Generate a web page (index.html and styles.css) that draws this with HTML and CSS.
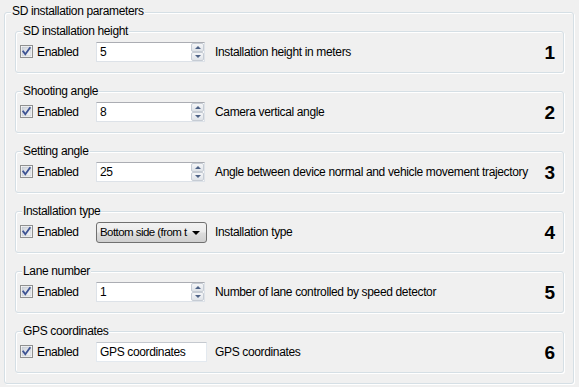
FILE: index.html
```html
<!DOCTYPE html>
<html>
<head>
<meta charset="utf-8">
<link rel="stylesheet" href="styles.css">
</head>
<body>
<div class="outer">
  <span class="legend outer-legend">SD installation parameters</span>

  <div class="group">
    <span class="legend">SD installation height</span>
    <div class="row">
      <label class="chk"><svg class="box" width="13" height="13" viewBox="0 0 13 13"><defs><linearGradient id="g1" x1="0" y1="0" x2="1" y2="1"><stop offset="0" stop-color="#cdd2d9"/><stop offset="1" stop-color="#f7f7f8"/></linearGradient></defs><rect x="0.5" y="0.5" width="12" height="12" fill="#fff" stroke="#8e8f8f"/><rect x="2" y="2" width="9" height="9" fill="url(#g1)" stroke="#b9bec6" stroke-width="0.6"/><path d="M3.2 6.4 L5.3 9.2 L9.8 3" fill="none" stroke="#3d5394" stroke-width="1.8" stroke-linecap="square"/></svg><span>Enabled</span></label>
      <div class="field spin"><span class="val">5</span><span class="btns"><span class="btn"><i class="up"></i></span><span class="btn"><i class="dn"></i></span></span></div>
      <span class="desc">Installation height in meters</span>
      <span class="num">1</span>
    </div>
  </div>

  <div class="group">
    <span class="legend">Shooting angle</span>
    <div class="row">
      <label class="chk"><svg class="box" width="13" height="13" viewBox="0 0 13 13"><rect x="0.5" y="0.5" width="12" height="12" fill="#fff" stroke="#8e8f8f"/><rect x="2" y="2" width="9" height="9" fill="url(#g1)" stroke="#b9bec6" stroke-width="0.6"/><path d="M3.2 6.4 L5.3 9.2 L9.8 3" fill="none" stroke="#3d5394" stroke-width="1.8" stroke-linecap="square"/></svg><span>Enabled</span></label>
      <div class="field spin"><span class="val">8</span><span class="btns"><span class="btn"><i class="up"></i></span><span class="btn"><i class="dn"></i></span></span></div>
      <span class="desc">Camera vertical angle</span>
      <span class="num">2</span>
    </div>
  </div>

  <div class="group">
    <span class="legend">Setting angle</span>
    <div class="row">
      <label class="chk"><svg class="box" width="13" height="13" viewBox="0 0 13 13"><rect x="0.5" y="0.5" width="12" height="12" fill="#fff" stroke="#8e8f8f"/><rect x="2" y="2" width="9" height="9" fill="url(#g1)" stroke="#b9bec6" stroke-width="0.6"/><path d="M3.2 6.4 L5.3 9.2 L9.8 3" fill="none" stroke="#3d5394" stroke-width="1.8" stroke-linecap="square"/></svg><span>Enabled</span></label>
      <div class="field spin"><span class="val">25</span><span class="btns"><span class="btn"><i class="up"></i></span><span class="btn"><i class="dn"></i></span></span></div>
      <span class="desc">Angle between device normal and vehicle movement trajectory</span>
      <span class="num">3</span>
    </div>
  </div>

  <div class="group">
    <span class="legend">Installation type</span>
    <div class="row">
      <label class="chk"><svg class="box" width="13" height="13" viewBox="0 0 13 13"><rect x="0.5" y="0.5" width="12" height="12" fill="#fff" stroke="#8e8f8f"/><rect x="2" y="2" width="9" height="9" fill="url(#g1)" stroke="#b9bec6" stroke-width="0.6"/><path d="M3.2 6.4 L5.3 9.2 L9.8 3" fill="none" stroke="#3d5394" stroke-width="1.8" stroke-linecap="square"/></svg><span>Enabled</span></label>
      <div class="combo"><span class="combo-text">Bottom side (from t</span><span class="arrow"></span></div>
      <span class="desc">Installation type</span>
      <span class="num">4</span>
    </div>
  </div>

  <div class="group">
    <span class="legend">Lane number</span>
    <div class="row">
      <label class="chk"><svg class="box" width="13" height="13" viewBox="0 0 13 13"><rect x="0.5" y="0.5" width="12" height="12" fill="#fff" stroke="#8e8f8f"/><rect x="2" y="2" width="9" height="9" fill="url(#g1)" stroke="#b9bec6" stroke-width="0.6"/><path d="M3.2 6.4 L5.3 9.2 L9.8 3" fill="none" stroke="#3d5394" stroke-width="1.8" stroke-linecap="square"/></svg><span>Enabled</span></label>
      <div class="field spin"><span class="val">1</span><span class="btns"><span class="btn"><i class="up"></i></span><span class="btn"><i class="dn"></i></span></span></div>
      <span class="desc">Number of lane controlled by speed detector</span>
      <span class="num">5</span>
    </div>
  </div>

  <div class="group">
    <span class="legend">GPS coordinates</span>
    <div class="row">
      <label class="chk"><svg class="box" width="13" height="13" viewBox="0 0 13 13"><rect x="0.5" y="0.5" width="12" height="12" fill="#fff" stroke="#8e8f8f"/><rect x="2" y="2" width="9" height="9" fill="url(#g1)" stroke="#b9bec6" stroke-width="0.6"/><path d="M3.2 6.4 L5.3 9.2 L9.8 3" fill="none" stroke="#3d5394" stroke-width="1.8" stroke-linecap="square"/></svg><span>Enabled</span></label>
      <div class="field text"><span class="val">GPS coordinates</span></div>
      <span class="desc">GPS coordinates</span>
      <span class="num">6</span>
    </div>
  </div>
</div>
</body>
</html>
```

FILE: styles.css
```css
html, body {
  margin: 0;
  padding: 0;
  background: #f0f0f0;
}
body {
  font-family: "Liberation Sans", Arial, sans-serif;
  font-size: 12px;
  letter-spacing: -0.35px;
  color: #000;
  width: 579px;
  height: 387px;
  overflow: hidden;
}
.outer {
  position: relative;
  box-sizing: border-box;
  margin: 12px 0 0 4px;
  width: 570px;
  height: 372px;
  border: 1px solid #d5dfe5;
  border-radius: 3px;
  box-shadow: inset 1px 1px 0 #fff, 1px 1px 0 #fff;
  padding: 18px 9px 0 10px;
}
.legend {
  position: absolute;
  top: -8px;
  left: 6px;
  padding: 0 1px;
  line-height: 14px;
  background: #f0f0f0;
  white-space: nowrap;
}
.outer-legend {
  top: -9px;
  left: 6px;
}
.group {
  position: relative;
  box-sizing: border-box;
  height: 42px;
  margin-bottom: 18px;
  border: 1px solid #d5dfe5;
  border-radius: 3px;
  box-shadow: inset 1px 1px 0 #fff, 1px 1px 0 #fff;
  padding: 10px 8px 0 4px;
}
.row {
  display: flex;
  align-items: center;
  height: 20px;
}
.chk {
  display: flex;
  align-items: center;
  gap: 4px;
  width: 76px;
  flex: none;
}
.box {
  display: block;
  flex: none;
  margin-top: -2px;
}
.field {
  position: relative;
  box-sizing: border-box;
  width: 109px;
  height: 20px;
  flex: none;
  background: #fff;
  border: 1px solid #dde2e8;
  border-top-color: #abadb3;
  display: flex;
  align-items: center;
}
.field.text {
  width: 111px;
  border: 1px solid #e3e9ef;
  border-top-color: #c5c9cf;
  margin-right: -2px;
}
.val {
  padding-left: 3px;
  flex: 1;
}
.btns {
  display: flex;
  flex-direction: column;
  width: 13px;
  height: 18px;
}
.btn {
  flex: 1;
  box-sizing: border-box;
  border: 1px solid #c6ccd4;
  border-radius: 2px;
  background: linear-gradient(#f5f6f8, #dfe3e8);
  display: flex;
  align-items: center;
  justify-content: center;
}
.btn i {
  display: block;
  width: 0;
  height: 0;
  border-left: 3px solid transparent;
  border-right: 3px solid transparent;
}
.btn i.up {
  border-bottom: 3px solid #4f6386;
}
.btn i.dn {
  border-top: 3px solid #4f6386;
}
.combo {
  box-sizing: border-box;
  width: 111px;
  height: 21px;
  flex: none;
  margin-right: -2px;
  border: 1px solid #707070;
  border-radius: 3px;
  background: linear-gradient(#f2f2f2 0%, #ebebeb 48%, #dddddd 52%, #cfcfcf 100%);
  display: flex;
  align-items: center;
}
.combo-text {
  flex: 1;
  padding-left: 3px;
  white-space: nowrap;
  font-size: 11.5px;
  letter-spacing: -0.55px;
}
.arrow {
  flex: none;
  width: 0;
  height: 0;
  margin: 1px 6px 0 2px;
  border-left: 4px solid transparent;
  border-right: 4px solid transparent;
  border-top: 4px solid #000;
}
.desc {
  margin-left: 10px;
  flex: 1;
  white-space: nowrap;
}
.num {
  font-weight: bold;
  font-size: 19px;
  letter-spacing: 0;
  line-height: 20px;
  margin-top: 2px;
}
```
